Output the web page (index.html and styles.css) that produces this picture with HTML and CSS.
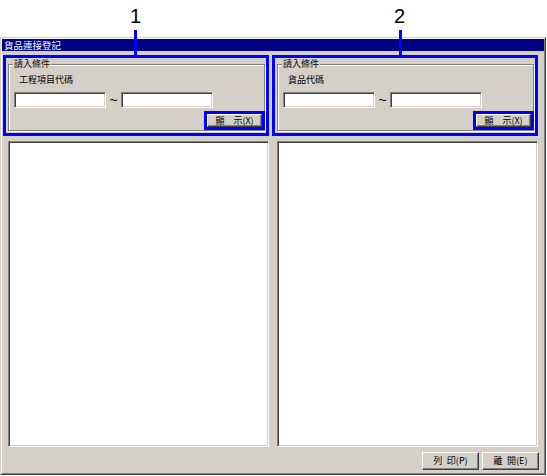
FILE: index.html
```html
<!DOCTYPE html>
<html lang="zh-Hant">
<head>
<meta charset="utf-8">
<title>貨品連接登記</title>
<link rel="stylesheet" href="styles.css">
</head>
<body>
<div class="annot">
  <span class="tag tag1">1</span>
  <span class="lead lead1"></span>
  <span class="tag tag2">2</span>
  <span class="lead lead2"></span>
</div>
<div class="window">
  <div class="titlebar">貨品連接登記</div>
  <div class="client">
    <div class="cols">
      <div class="col">
        <div class="callout">
          <fieldset class="group">
            <legend>請入條件</legend>
            <div class="field-label">工程項目代碼</div>
            <div class="range"><span class="input"></span><span class="tilde">~</span><span class="input"></span></div>
            <div class="actions"><button class="btn btn-show">顯&emsp;示(X)</button></div>
          </fieldset>
        </div>
        <div class="listbox"></div>
      </div>
      <div class="col">
        <div class="callout">
          <fieldset class="group">
            <legend>請入條件</legend>
            <div class="field-label">貨品代碼</div>
            <div class="range"><span class="input"></span><span class="tilde">~</span><span class="input"></span></div>
            <div class="actions"><button class="btn btn-show">顯&emsp;示(X)</button></div>
          </fieldset>
        </div>
        <div class="listbox"></div>
      </div>
    </div>
    <div class="footer">
      <button class="btn btn-foot">列&ensp;印(P)</button>
      <button class="btn btn-foot">離&ensp;開(E)</button>
    </div>
  </div>
</div>
</body>
</html>
```
FILE: styles.css
```css
html, body {
  margin: 0;
  padding: 0;
}
body {
  width: 547px;
  height: 476px;
  background: #fff;
  position: relative;
  overflow: hidden;
  font-family: "Noto Sans CJK TC", "Liberation Sans", sans-serif;
  font-size: 9px;
  color: #000;
}
.annot {
  height: 37px;
}
.tag {
  position: absolute;
  top: 6px;
  font-family: "Liberation Sans", Arial, sans-serif;
  font-size: 20px;
  line-height: 20px;
  color: #000;
}
.tag1 { left: 130px; }
.tag2 { left: 394px; }
.lead {
  position: absolute;
  top: 30px;
  width: 3px;
  height: 26px;
  background: #0000ff;
  z-index: 2;
}
.lead1 { left: 134px; }
.lead2 { left: 399px; }

.window {
  width: 546px;
  height: 438px;
  box-sizing: border-box;
  background: #d4d0c8;
  border: 1px solid;
  border-color: #d4d0c8 #404040 #404040 #d4d0c8;
  box-shadow: inset 1px 1px #fff, inset -1px -1px #808080;
  padding: 1px;
  display: flex;
  flex-direction: column;
}
.titlebar {
  height: 12px;
  line-height: 12px;
  background: #000080;
  color: #fff;
  font-size: 9.5px;
  padding-left: 2px;
  white-space: nowrap;
}
.client {
  flex: 1;
  display: flex;
  flex-direction: column;
  padding: 4px 6px 3px 1px;
}
.cols {
  display: grid;
  grid-template-columns: 266px 266px;
  column-gap: 3px;
}
.col {
  display: flex;
  flex-direction: column;
  gap: 5px;
}
.callout {
  height: 81px;
  box-sizing: border-box;
  border: 3px solid #0000ff;
  padding: 1px 1px 0 2px;
}
.group {
  margin: 0;
  height: 72px;
  box-sizing: border-box;
  padding: 6px 1px 0 5px;
  border: 1px solid #808080;
  box-shadow: 1px 1px 0 #fff, inset 1px 1px 0 #fff;
  min-width: 0;
}
.group legend {
  padding: 0 1px;
  margin-left: -1px;
  line-height: 10px;
  background: #d4d0c8;
}
.field-label {
  line-height: 10px;
  margin-left: 5px;
}
.range {
  display: flex;
  align-items: center;
  margin-top: 7px;
}
.input {
  width: 92px;
  height: 16px;
  box-sizing: border-box;
  background: #fff;
  border: 1px solid;
  border-color: #808080 #fff #fff #808080;
  box-shadow: inset 1px 1px #404040, inset -1px -1px #d4d0c8;
}
.tilde {
  width: 15px;
  text-align: center;
  font-family: "Liberation Sans", sans-serif;
  font-size: 14px;
  line-height: 16px;
}
.actions {
  display: flex;
  justify-content: flex-end;
  margin-top: 6px;
}
.btn {
  font-family: inherit;
  font-size: 9px;
  color: #000;
  background: #d4d0c8;
  border: 1px solid;
  border-color: #fff #404040 #404040 #fff;
  box-shadow: inset -1px -1px #808080, inset 1px 1px #d4d0c8;
  padding: 0;
  margin: 0;
  box-sizing: border-box;
  white-space: nowrap;
}
.btn-show {
  width: 55px;
  height: 13px;
  line-height: 11px;
  outline: 3px solid #0000ff;
  margin-right: 1px;
}
.listbox {
  margin-left: 5px;
  height: 306px;
  box-sizing: border-box;
  background: #fff;
  border: 1px solid;
  border-color: #808080 #fff #fff #808080;
  box-shadow: inset 1px 1px #404040, inset -1px -1px #d4d0c8;
}
.footer {
  display: flex;
  justify-content: flex-end;
  gap: 3px;
  margin-top: 5px;
  margin-right: -1px;
}
.btn-foot {
  width: 57px;
  height: 18px;
  line-height: 16px;
}
```
